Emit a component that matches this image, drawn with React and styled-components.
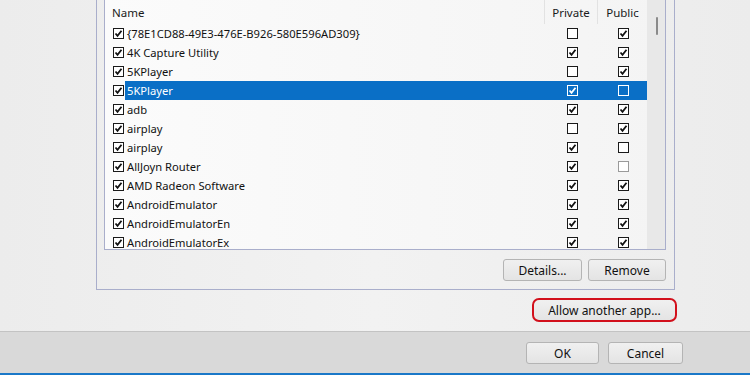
import React from 'react';
import styled, { createGlobalStyle } from 'styled-components';

const GlobalStyle = createGlobalStyle`
  html, body {
    margin: 0;
    padding: 0;
    background: #efefef;
  }
  body {
    font-family: "Noto Sans", "Open Sans", sans-serif;
    font-size: 11.2px;
    color: #111;
  }
`;

const apps = [
  { name: '{78E1CD88-49E3-476E-B926-580E596AD309}', priv: false, pub: true },
  { name: '4K Capture Utility', priv: true, pub: true },
  { name: '5KPlayer', priv: false, pub: true },
  { name: '5KPlayer', priv: true, pub: false, selected: true },
  { name: 'adb', priv: true, pub: true },
  { name: 'airplay', priv: false, pub: true },
  { name: 'airplay', priv: true, pub: false },
  { name: 'AllJoyn Router', priv: true, pub: false, pubDisabled: true },
  { name: 'AMD Radeon Software', priv: true, pub: true },
  { name: 'AndroidEmulator', priv: true, pub: true },
  { name: 'AndroidEmulatorEn', priv: true, pub: true },
  { name: 'AndroidEmulatorEx', priv: true, pub: true },
];

const Page = styled.div`
  width: 750px;
  height: 375px;
  display: flex;
  flex-direction: column;
  overflow: hidden;
`;

const Main = styled.div`
  height: 331px;
  flex: none;
  display: flex;
  flex-direction: column;
  background: linear-gradient(90deg, #ececec 0%, #f2f2f2 50%, #ececec 100%);
`;

const GroupBox = styled.div`
  margin-left: 96px;
  width: 579px;
  box-sizing: border-box;
  border: 1px solid #a9aecb;
  border-top: none;
  padding: 0 8px 8px 7px;
`;

const ListView = styled.div`
  height: 250px;
  box-sizing: border-box;
  border: 1px solid #a9aecb;
  border-top: none;
  display: flex;
  overflow: hidden;
  background: linear-gradient(90deg, #fbfbfb 0%, #f4f4f4 100%);
`;

const Table = styled.div`
  width: 542px;
  display: flex;
  flex-direction: column;
`;

const Grid = styled.div`
  display: grid;
  grid-template-columns: 439px 53px 50px;
  height: ${(p) => p.$h}px;
  flex: none;
`;

const HeadCell = styled.div`
  display: flex;
  align-items: center;
  justify-content: ${(p) => (p.$center ? 'center' : 'flex-start')};
  padding-left: ${(p) => (p.$center ? 0 : 7)}px;
  border-left: ${(p) => (p.$sep ? '1px solid #e2e2e2' : 'none')};
  color: #1a1a1a;
  font-size: 11.5px;
`;

const NameCell = styled.div`
  display: flex;
  align-items: center;
  padding-left: 8px;
`;

const Label = styled.span`
  flex: 1;
  align-self: stretch;
  display: flex;
  align-items: center;
  margin-left: 1px;
  padding-left: 2px;
  background: ${(p) => (p.$sel ? '#0a6fc6' : 'transparent')};
  color: ${(p) => (p.$sel ? '#fff' : '#111')};
  white-space: nowrap;
`;

const CheckCell = styled.div`
  display: flex;
  align-items: center;
  justify-content: center;
  padding-left: ${(p) => p.$shift || 0}px;
  background: ${(p) => (p.$sel ? '#0a6fc6' : 'transparent')};
`;

const Box = styled.span`
  width: 11px;
  height: 11px;
  box-sizing: border-box;
  flex: none;
  display: flex;
  align-items: center;
  justify-content: center;
  border: 1px solid ${(p) => (p.$sel ? '#fff' : p.$disabled ? '#9a9a9a' : '#1a1a1a')};
  background: ${(p) => (p.$sel ? 'transparent' : '#fff')};
`;

const Scrollbar = styled.div`
  width: 18px;
  background: #e8e8e8;
  display: flex;
  justify-content: center;
  padding-top: 17px;
  box-sizing: border-box;
`;

const Thumb = styled.div`
  width: 2px;
  height: 18px;
  margin-left: 1px;
  background: #8a8a8a;
  border-radius: 1px;
`;

const ButtonRow = styled.div`
  display: flex;
  justify-content: flex-end;
  gap: 6px;
  margin-top: 9px;
`;

const Button = styled.button`
  width: ${(p) => p.$w}px;
  height: 22px;
  box-sizing: border-box;
  border: 1px solid #b4b4b4;
  border-radius: 3px;
  background: linear-gradient(#f0f0f0, #e4e4e4);
  font-family: inherit;
  font-size: 12px;
  color: #111;
  padding: 0;
`;

const AllowRow = styled.div`
  display: flex;
  justify-content: flex-end;
  padding-right: 73px;
  margin-top: 8px;
`;

const AllowButton = styled.button`
  width: 145px;
  height: 24px;
  box-sizing: border-box;
  border: 2px solid #d2101c;
  border-radius: 7px;
  background: linear-gradient(#f0f0f0, #e4e4e4);
  font-family: inherit;
  font-size: 12px;
  color: #111;
  padding: 0;
`;

const Footer = styled.div`
  flex: 1;
  border-top: 1px solid #c3c3c3;
  background: #d9d9d9;
  display: flex;
  justify-content: flex-end;
  align-items: flex-start;
  gap: 9px;
  padding: 10px 67px 0 0;
`;

const BlueLine = styled.div`
  height: 2px;
  flex: none;
  background: #1a78c8;
`;

const Check = ({ on, sel, disabled }) => (
  <Box $sel={sel} $disabled={disabled}>
    {on && (
      <svg width="9" height="9" viewBox="0 0 9 9">
        <path
          d="M1.5 4.5 L3.5 6.8 L7.5 1.8"
          fill="none"
          stroke={sel ? '#fff' : '#111'}
          strokeWidth="1.8"
        />
      </svg>
    )}
  </Box>
);

export default function App() {
  return (
    <Page>
      <GlobalStyle />
      <Main>
        <GroupBox>
          <ListView>
            <Table>
              <Grid $h={24}>
                <HeadCell>Name</HeadCell>
                <HeadCell $center $sep>Private</HeadCell>
                <HeadCell $center $sep>Public</HeadCell>
              </Grid>
              {apps.map((a, i) => (
                <Grid key={i} $h={19}>
                  <NameCell>
                    <Check on sel={false} />
                    <Label $sel={a.selected}>{a.name}</Label>
                  </NameCell>
                  <CheckCell $sel={a.selected} $shift={3}>
                    <Check on={a.priv} sel={a.selected} />
                  </CheckCell>
                  <CheckCell $sel={a.selected} $shift={3}>
                    <Check on={a.pub} sel={a.selected} disabled={a.pubDisabled} />
                  </CheckCell>
                </Grid>
              ))}
            </Table>
            <Scrollbar>
              <Thumb />
            </Scrollbar>
          </ListView>
          <ButtonRow>
            <Button $w={79}>Details...</Button>
            <Button $w={78}>Remove</Button>
          </ButtonRow>
        </GroupBox>
        <AllowRow>
          <AllowButton>Allow another app...</AllowButton>
        </AllowRow>
      </Main>
      <Footer>
        <Button $w={73}>OK</Button>
        <Button $w={75}>Cancel</Button>
      </Footer>
      <BlueLine />
    </Page>
  );
}
